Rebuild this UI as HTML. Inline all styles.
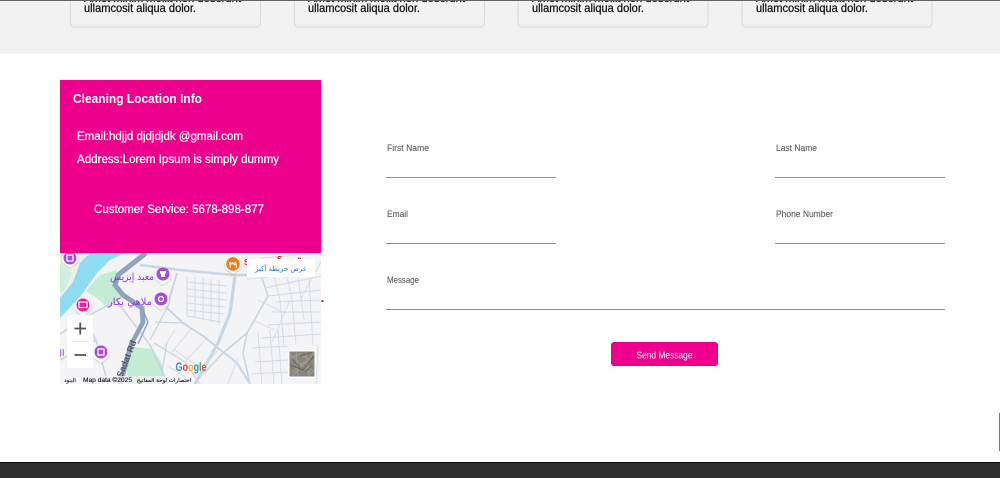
<!DOCTYPE html>
<html lang="en">
<head>
<meta charset="utf-8">
<title>Cleaning Location Info</title>
<style>
html,body{margin:0;padding:0;background:#fff;}
body{width:1000px;height:478px;overflow:hidden;position:relative;font-family:"Liberation Sans","Noto Sans CJK SC",sans-serif;}
svg{position:absolute;left:0;top:0;display:block;}
</style>
</head>
<body>
<svg width="1000" height="478" viewBox="0 0 1000 478" xmlns="http://www.w3.org/2000/svg" font-family="'Liberation Sans','Noto Sans CJK SC',sans-serif">
<defs>
<clipPath id="m"><rect x="60" y="253" width="261" height="131"/></clipPath>
<filter id="b" x="-5%" y="-5%" width="110%" height="110%"><feGaussianBlur stdDeviation="0.3"/></filter>
<filter id="s" x="-20%" y="-20%" width="140%" height="140%"><feDropShadow dx="0" dy="0.5" stdDeviation="0.8" flood-opacity="0.3"/></filter>
</defs>

<!-- top section -->
<rect width="1000" height="54" fill="#f2f2f2"/>
<g fill="#f2f2f2" stroke="#dcdcdc" stroke-width="1.200">
<rect x="70.500" y="-10" width="190" height="37" rx="4"/>
<rect x="294.500" y="-10" width="190" height="37" rx="4"/>
<rect x="518" y="-10" width="190" height="37" rx="4"/>
<rect x="742" y="-10" width="190" height="37" rx="4"/>
</g>
<g font-size="12" fill="#111" stroke="#111" stroke-width="0.250">
<text x="84" y="12" textLength="112" lengthAdjust="spacingAndGlyphs">ullamcosit aliqua dolor.</text>
<text x="308" y="12" textLength="112" lengthAdjust="spacingAndGlyphs">ullamcosit aliqua dolor.</text>
<text x="532" y="12" textLength="112" lengthAdjust="spacingAndGlyphs">ullamcosit aliqua dolor.</text>
<text x="756" y="12" textLength="112" lengthAdjust="spacingAndGlyphs">ullamcosit aliqua dolor.</text>
<text x="84" y="2" textLength="157" lengthAdjust="spacingAndGlyphs">Amet minim mollit non deserunt</text>
<text x="308" y="2" textLength="157" lengthAdjust="spacingAndGlyphs">Amet minim mollit non deserunt</text>
<text x="532" y="2" textLength="157" lengthAdjust="spacingAndGlyphs">Amet minim mollit non deserunt</text>
<text x="756" y="2" textLength="157" lengthAdjust="spacingAndGlyphs">Amet minim mollit non deserunt</text>
</g>
<rect width="1000" height="1" fill="#666"/>

<!-- pink panel -->
<rect x="60" y="80" width="261" height="173" fill="#ec008c"/>
<text x="73" y="103" font-size="12.500" font-weight="700" fill="#fff" textLength="129" lengthAdjust="spacingAndGlyphs">Cleaning Location Info</text>
<g font-size="11.500" fill="#fff" stroke="#fff" stroke-width="0.250">
<text x="77" y="140" textLength="166" lengthAdjust="spacingAndGlyphs">Email:hdjjd djdjdjdk @gmail.com</text>
<text x="77" y="163" textLength="202" lengthAdjust="spacingAndGlyphs">Address:Lorem Ipsum is simply dummy</text>
<text x="94" y="213" textLength="170" lengthAdjust="spacingAndGlyphs">Customer Service: 5678-898-877</text>
</g>

<!-- map -->
<g clip-path="url(#m)">
<rect x="60" y="253" width="261" height="131" fill="#f4f3f5"/>
<path d="M60 253H90L80 263 73 282 60 298Z" fill="#eef0e6"/>
<path d="M60 264L72 272 66 288 60 294Z" fill="#cfeedd"/>
<path d="M60 298L73 282 80 263 90 253H125L110 260 97 273 83 293 77 300 60 318Z" fill="#8fdcf2"/>
<path d="M86 291L100 275 117 270 113 286 122 298 108 308 98 299Z" fill="#c3ecd4"/>
<path d="M124 358L134 347 153 349 161 362 167 384H130Z" fill="#c3ecd4"/>

<!-- arterial roads -->
<g fill="none" stroke="#c9d6e1" filter="url(#b)">
<path stroke-width="3.200" d="M235 276L230 313 218 343 195 384"/>
<path stroke-width="2.400" d="M140 265L180 270 233 275 247 275"/>
<path stroke-width="2" d="M177 273L167 308 183 323 203 336 237 363 250 384"/>
<path stroke-width="1.600" d="M262 278L268 296 247 333 223 353 205 372"/>
<path stroke-width="1.600" d="M247 333L243 353 250 384"/>
<path stroke-width="1.600" d="M118 300L84 318 60 334M84 318L96 340 108 384M60 360L96 340M118 303L150 345 168 384"/>
<path stroke-width="1.300" d="M155 322L183 323M167 308L150 340M154 343L185 362 200 384M167 342L160 384"/>
</g>
<!-- side streets -->
<g fill="none" stroke="#d2dce6" stroke-width="0.900" filter="url(#b)">
<path d="M187 282L227 286M187 289L226 293M187 296L226 300M187 303L225 307M187 310L224 314M187 316L220 322"/>
<path d="M187 276L187 316M195 277L195 318M203 278L203 320M211 279L211 322M219 280L219 325"/>
<path d="M175 330L163 348M190 330L172 352M205 340L185 362M218 350L200 372M175 350L205 372M168 366L190 380"/>
<path d="M238 358L228 384M258 300L283 312M252 320L275 330M262 278L300 270M265 288L321 276M268 296L321 290M276 302L321 300M272 312L321 312M268 325L321 322M262 338L321 334M252 348L288 346M255 362L288 360M252 374L288 372"/>
<path d="M272 268L280 300 284 345M284 262L292 300 296 345M296 262L304 320M308 262L313 345M258 333L262 384M270 330L274 384M278 330L282 384M318 345L316 384M321 262L300 300M290 300L272 342"/>
<path d="M262 258L321 253M247 279L262 278"/>
</g>

<!-- highway -->
<path d="M146 253L118 275 115 285 123 295 142 308 143 322 132 342 120 384" fill="none" stroke="#8fa3bb" stroke-width="5"/>
<path d="M138 309L140 322 130 341M146 308L147 322" fill="none" stroke="#f4f3f5" stroke-width="0.800"/>
<path d="M142 308L148 322 138 344" fill="none" stroke="#8fa3bb" stroke-width="1.400"/>
<text x="0" y="0" font-size="9" font-weight="700" fill="#4d5666" transform="translate(122 378) rotate(-68)">Sadat Rd</text>

<!-- pins -->
<g filter="url(#s)">
<path d="M63 263a8 8 0 1 1 14 0l-7 5z" fill="#fff"/>
<path d="M76 311a8 8 0 1 1 14 0l-7 5z" fill="#fff"/>
<path d="M156 280a8 8 0 1 1 14 0l-7 5z" fill="#fff"/>
<path d="M154 305a8 8 0 1 1 14 0l-7 5z" fill="#fff"/>
<path d="M94 358a8 8 0 1 1 14 0l-7 5z" fill="#fff"/>
<path d="M226 269a8 8 0 1 1 14 0l-7 5z" fill="#fff"/>
</g>
<circle cx="70" cy="258" r="6.500" fill="#a64ddb"/><rect x="67" y="255" width="6" height="6" fill="none" stroke="#fff" stroke-width="1.200"/>
<circle cx="83" cy="305" r="6.500" fill="#ec1f9b"/><rect x="79" y="302" width="8" height="5.500" fill="none" stroke="#fff" stroke-width="1.200"/>
<circle cx="163" cy="274" r="6.500" fill="#a64ddb"/><path d="M160 271h6v2l-1 1v3h-4v-3l-1-1z" fill="#fff"/>
<circle cx="161" cy="299" r="6.500" fill="#a64ddb"/><circle cx="161" cy="299" r="2.500" fill="none" stroke="#fff" stroke-width="1.300"/>
<circle cx="101" cy="352" r="6.500" fill="#a64ddb"/><rect x="98" y="349" width="6" height="6" fill="none" stroke="#fff" stroke-width="1.200"/>
<circle cx="233" cy="264" r="6.800" fill="#f47b1c"/>
<text x="233" y="267.500" font-size="8" font-weight="700" fill="#fff" text-anchor="middle">٣٩</text>
<text x="244" y="265" font-size="8" font-weight="700" fill="#c5221f">S</text>
<text x="277" y="262" font-size="8" font-weight="700" fill="#c5221f">S</text>
<text x="297" y="262" font-size="8" font-weight="700" fill="#c5221f">o</text>

<!-- labels -->
<g font-family="'DejaVu Sans','Liberation Sans',sans-serif" fill="#9334e6" font-size="10" text-anchor="middle" direction="rtl">
<text x="132" y="280" textLength="44" lengthAdjust="spacingAndGlyphs">معبد إيزيس</text>
<text x="130" y="305" textLength="44" lengthAdjust="spacingAndGlyphs">ملاهي بكار</text>
</g>
<text x="60" y="356" font-size="9" fill="#9334e6" text-anchor="middle">ال</text>

<!-- view larger map -->
<rect x="247" y="259" width="68" height="18" fill="#fff"/>
<text x="281" y="271" font-size="7" fill="#1a73e8" text-anchor="middle" direction="rtl" font-family="'DejaVu Sans',sans-serif">عرض خريطة أكبر</text>

<!-- zoom control -->
<rect x="67" y="315" width="26" height="53" fill="#fff"/>
<rect x="71" y="341" width="18" height="0.800" fill="#e4e4e4"/>
<path d="M74.500 328.500H86M80.250 322.500V334.500" stroke="#555" stroke-width="1.800" fill="none"/>
<path d="M74.500 355H86" stroke="#555" stroke-width="1.800" fill="none"/>

<!-- satellite tile -->
<rect x="288" y="350" width="28" height="28" fill="#fff"/>
<rect x="289.500" y="351.500" width="25" height="25" fill="#87857c"/>
<path d="M290 358L300 354 313 362M292 372L304 362 314 372M296 352L298 376M306 352L309 376M290 354L312 374M292 376L314 353" stroke="#a09e94" stroke-width="1" fill="none"/>
<path d="M290 365L303 370 314 356M300 356L312 352M293 360L300 368M305 372L312 366" stroke="#686760" stroke-width="1" fill="none"/>

<!-- google logo -->
<g font-size="11.500" font-weight="700">
<text x="175.500" y="371" textLength="31" lengthAdjust="spacingAndGlyphs"><tspan fill="#4285f4">G</tspan><tspan fill="#ea4335">o</tspan><tspan fill="#fbbc05">o</tspan><tspan fill="#4285f4">g</tspan><tspan fill="#34a853">l</tspan><tspan fill="#ea4335">e</tspan></text>
</g>

<!-- attribution -->
<rect x="60" y="376" width="131" height="8" fill="#f4f3f5" opacity=".75"/>
<g font-size="6.800" fill="#111" stroke="#111" stroke-width="0.120">
<text x="83" y="382" textLength="49" lengthAdjust="spacingAndGlyphs">Map data ©2025</text>
<text x="70" y="382" text-anchor="middle" direction="rtl" font-size="5.500" font-family="'DejaVu Sans',sans-serif">البنود</text>
<text x="164" y="382" text-anchor="middle" direction="rtl" font-size="5.500" font-family="'DejaVu Sans',sans-serif">اختصارات لوحة المفاتيح</text>
</g>
</g>
<rect x="321.500" y="300" width="2" height="2" fill="#e8112d"/>

<!-- form -->
<g font-size="9" fill="#5c5c5c" stroke="#5c5c5c" stroke-width="0.100">
<text x="387" y="151" textLength="42" lengthAdjust="spacingAndGlyphs">First Name</text>
<text x="776" y="151" textLength="41" lengthAdjust="spacingAndGlyphs">Last Name</text>
<text x="387" y="217" textLength="21" lengthAdjust="spacingAndGlyphs">Email</text>
<text x="776" y="217" textLength="57" lengthAdjust="spacingAndGlyphs">Phone Number</text>
<text x="387" y="283" textLength="32" lengthAdjust="spacingAndGlyphs">Message</text>
</g>
<g fill="#8f8f8f">
<rect x="386" y="177" width="170" height="1"/>
<rect x="775" y="177" width="170" height="1"/>
<rect x="386" y="243" width="170" height="1"/>
<rect x="775" y="243" width="170" height="1"/>
<rect x="386" y="309" width="559" height="1"/>
</g>

<!-- button -->
<rect x="611" y="342" width="107" height="24" rx="3" fill="#ec008c"/>
<text x="664.500" y="358.500" font-size="10.500" fill="#fff" text-anchor="middle" textLength="56" lengthAdjust="spacingAndGlyphs">Send Message</text>

<!-- scrollbar sliver -->
<rect x="999" y="413" width="1" height="38" fill="#777"/>

<!-- footer -->
<rect x="0" y="462" width="1000" height="16" fill="#2d2d2d"/>
<rect x="0" y="462" width="1000" height="1" fill="#111"/>
</svg>
</body>
</html>
